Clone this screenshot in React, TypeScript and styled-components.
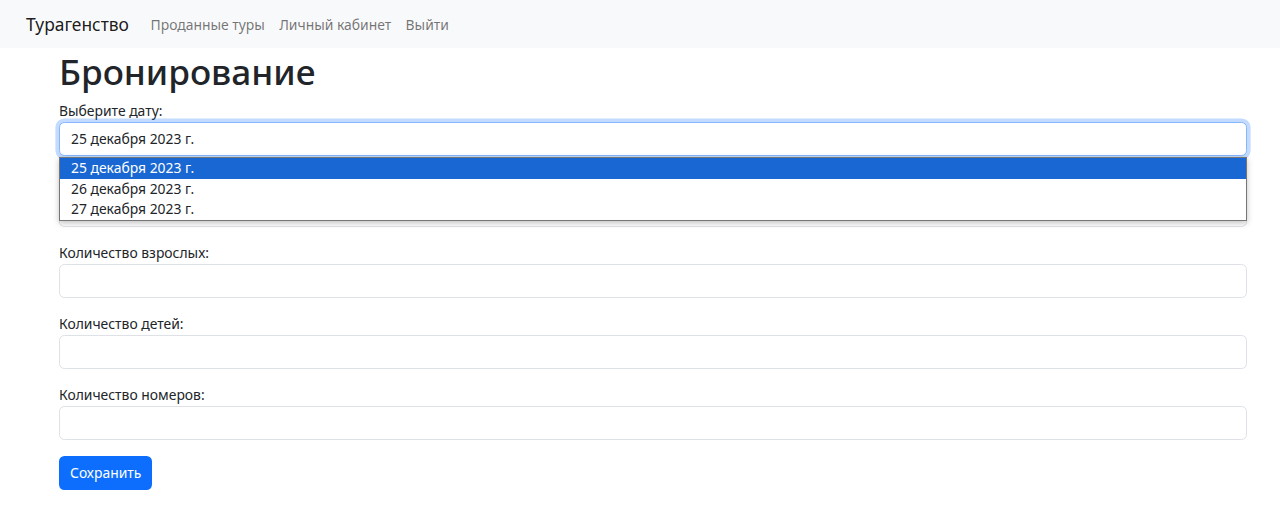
import React from "react";
import styled, { createGlobalStyle } from "styled-components";

const GlobalStyle = createGlobalStyle`
  body {
    margin: 0;
    background: #fff;
    color: #212529;
    font-family: "Segoe UI", "Noto Sans", "Open Sans", sans-serif;
  }
`;

const Navbar = styled.nav`
  height: 48px;
  background: #f8f9fa;
  display: flex;
  align-items: center;
  padding-left: 26px;
`;

const Brand = styled.a`
  font-size: 17.4px;
  color: rgba(0, 0, 0, 0.9);
  text-decoration: none;
  margin-right: 14.4px;
`;

const NavLink = styled.a`
  font-size: 13.9px;
  color: rgba(0, 0, 0, 0.55);
  text-decoration: none;
  padding: 0 7.2px;
`;

const Container = styled.main`
  padding: 0 33px 0 59px;
`;

const Title = styled.h1`
  font-size: 35.2px;
  font-weight: 500;
  line-height: 43px;
  margin: 2.4px 0 6.6px;
`;

const Group = styled.div`
  margin-bottom: 15px;
`;

const Label = styled.label`
  display: block;
  height: 22px;
  font-size: 13.9px;
  line-height: 22px;
`;

const Field = styled.div<{ focused?: boolean }>`
  position: relative;
  box-sizing: border-box;
  height: 34px;
  border: 1px solid ${(p) => (p.focused ? "#86b7fe" : "#dee2e6")};
  border-radius: 5.4px;
  box-shadow: ${(p) =>
    p.focused ? "0 0 0 3.6px rgba(13, 110, 253, 0.25)" : "none"};
  padding: 0 11px;
  display: flex;
  align-items: center;
  font-size: 13.9px;
  background: #fff;
`;

const Dropdown = styled.ul`
  position: absolute;
  top: 34px;
  left: -1px;
  right: -1px;
  margin: 0;
  padding: 0;
  list-style: none;
  background: #fff;
  border: 1px solid #767676;
  box-shadow: 0 2px 6px rgba(0, 0, 0, 0.25);
  z-index: 10;
`;

const Option = styled.li<{ active?: boolean }>`
  height: 20.6px;
  line-height: 20.6px;
  padding-left: 11px;
  font-size: 13.9px;
  background: ${(p) => (p.active ? "#1967d2" : "#fff")};
  color: ${(p) => (p.active ? "#fff" : "#212529")};
`;

const Button = styled.button`
  margin-top: 1px;
  height: 34px;
  padding: 0 11px;
  border: none;
  border-radius: 5.4px;
  background: #0d6efd;
  color: #fff;
  font-family: inherit;
  font-size: 13.9px;
`;

const dates = ["25 декабря 2023 г.", "26 декабря 2023 г.", "27 декабря 2023 г."];

const App: React.FC = () => {
  return (
    <>
      <GlobalStyle />
      <Navbar>
        <Brand href="#">Турагенство</Brand>
        <NavLink href="#">Проданные туры</NavLink>
        <NavLink href="#">Личный кабинет</NavLink>
        <NavLink href="#">Выйти</NavLink>
      </Navbar>
      <Container>
        <Title>Бронирование</Title>
        <Group>
          <Label>Выберите дату:</Label>
          <Field focused>
            {dates[0]}
            <Dropdown>
              {dates.map((d, i) => (
                <Option key={d} active={i === 0}>
                  {d}
                </Option>
              ))}
            </Dropdown>
          </Field>
        </Group>
        {/* label of this field is hidden under the open list */}
        <Group>
          <Label />
          <Field />
        </Group>
        <Group>
          <Label>Количество взрослых:</Label>
          <Field />
        </Group>
        <Group>
          <Label>Количество детей:</Label>
          <Field />
        </Group>
        <Group>
          <Label>Количество номеров:</Label>
          <Field />
        </Group>
        <Button>Сохранить</Button>
      </Container>
    </>
  );
};

export default App;
